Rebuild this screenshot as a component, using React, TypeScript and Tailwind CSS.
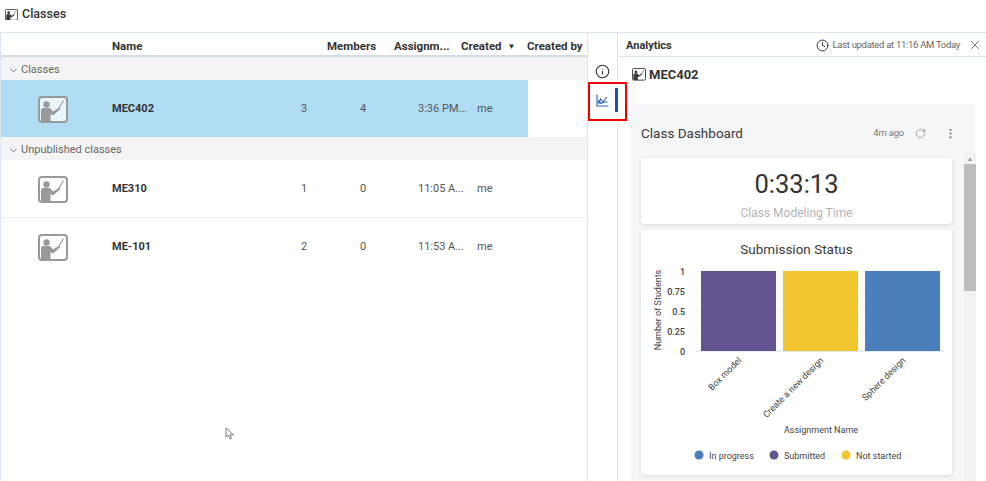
import { ChevronDown, Clock, EllipsisVertical, Info, RotateCw, X } from "lucide-react";

const rows = [
  { name: "ME310", members: 1, assignments: 0, created: "11:05 A..." },
  { name: "ME-101", members: 2, assignments: 0, created: "11:53 A..." },
];

// grey teacher-at-a-board icon, used big in rows and small in titles
function ClassIcon({ size = 30, dark = false }: { size?: number; dark?: boolean }) {
  const color = dark ? "#3a3a3a" : "#999999";
  return (
    <svg width={size} height={size * 0.9} viewBox="0 0 30 27" fill="none">
      <rect x="1" y="1" width="28" height="25" rx="3" fill="#ffffff" fillOpacity={dark ? 1 : 0.7} stroke={color} strokeWidth="2" />
      <circle cx="8.5" cy="8.5" r="3.2" fill={color} />
      <path d="M3 25.5V14.5a2.5 2.5 0 0 1 2.5-2.5h6.5l3 3.5 6.5-4 1 1.5-7.5 6.5-2.5-1.5v7.5z" fill={color} />
      <path d="M21 12l4.5-7.5" stroke={color} strokeWidth="1.1" />
    </svg>
  );
}

function ChartIcon() {
  return (
    <svg width="13" height="13" viewBox="0 0 13 13" fill="none" stroke="#2b5cb8" strokeWidth="1.1">
      <path d="M1 0.5V12H12.5" />
      <path d="M2.5 10l2-5 2.5 3 4-5" />
      <path d="M2 6.5l3 3 3-1.5 3.5 0" />
    </svg>
  );
}

function GroupRow({ label }: { label: string }) {
  return (
    <div className="flex items-center gap-[2px] bg-[#f4f4f4] pl-[7px] pt-[3px] text-[11px] text-[#666]">
      <ChevronDown size={11} strokeWidth={2} />
      <span>{label}</span>
    </div>
  );
}

function ClassRow({ name, members, assignments, created, selected }: { name: string; members: number; assignments: number; created: string; selected?: boolean }) {
  return (
    <div className={`grid h-[57px] w-[527px] grid-cols-[111px_184px_16px_43px_16px_47px_59px_51px] items-center pt-[2px] text-[11px] text-[#555] ${selected ? "bg-[#b0dcf4]" : ""}`}>
      <div className="flex justify-center pr-[8px]">
        <ClassIcon />
      </div>
      <span className="font-bold text-[#333]">{name}</span>
      <span className="text-center">{members}</span>
      <span />
      <span className="text-center">{assignments}</span>
      <span />
      <span className="whitespace-nowrap">{created}</span>
      <span>me</span>
    </div>
  );
}

function SubmissionChart() {
  const ticks = [
    { label: "1", y: 41 },
    { label: "0.75", y: 61 },
    { label: "0.5", y: 81 },
    { label: "0.25", y: 101 },
    { label: "0", y: 121 },
  ];
  const bars = [
    { x: 60, color: "#63548f", name: "Box model" },
    { x: 142, color: "#f0c52e", name: "Create a new design" },
    { x: 224, color: "#4a7fba", name: "Sphere design" },
  ];
  const legend = [
    { cx: 58, color: "#4a7fba", text: "In progress", tx: 68 },
    { cx: 133, color: "#63548f", text: "Submitted", tx: 143 },
    { cx: 205, color: "#f0c52e", text: "Not started", tx: 215 },
  ];
  return (
    <svg width="311" height="245" viewBox="0 0 311 245" className="absolute left-0 top-0" fontFamily="Roboto, sans-serif">
      {ticks.map((t) => (
        <g key={t.label}>
          <line x1="55" x2="303" y1={t.y} y2={t.y} stroke={t.y === 121 ? "#cdd6ea" : "#f0f0f0"} />
          <text x="44" y={t.y + 3.5} textAnchor="end" fontSize="9" fontWeight="500" fill="#444">
            {t.label}
          </text>
        </g>
      ))}
      {bars.map((b) => (
        <g key={b.name}>
          <rect x={b.x} y="41" width="75" height="80" fill={b.color} />
          <text transform={`translate(${b.x + 41} 131) rotate(-45)`} textAnchor="end" fontSize="9" fill="#444">
            {b.name}
          </text>
        </g>
      ))}
      <text transform="translate(20 80) rotate(-90)" textAnchor="middle" fontSize="9" fill="#444">
        Number of Students
      </text>
      <text x="180" y="203" textAnchor="middle" fontSize="9" fill="#444">
        Assignment Name
      </text>
      {legend.map((l) => (
        <g key={l.text}>
          <circle cx={l.cx} cy="225" r="4.5" fill={l.color} />
          <text x={l.tx} y="228.5" fontSize="9" fill="#444">
            {l.text}
          </text>
        </g>
      ))}
    </svg>
  );
}

export default function App() {
  return (
    <div className="relative flex h-[481px] w-[986px] flex-col overflow-hidden bg-white font-['Roboto',sans-serif] text-[#333]">
      <div className="flex h-[33px] shrink-0 items-center gap-[4px] border-b border-[#dde5ee] pb-[3px] pl-[5px] text-[12.5px] font-medium">
        <ClassIcon size={13} dark />
        <span>Classes</span>
      </div>

      <div className="flex min-h-0 flex-1">
        {/* class list */}
        <div className="flex w-[588px] shrink-0 flex-col border-l border-r border-[#dde5ee]">
          <div className="grid h-[24px] shrink-0 grid-cols-[111px_215px_67px_67px_66px_60px] items-center border-b-2 border-[#d5dbe3] pt-[5px] text-[11.5px] font-bold text-[#333]">
            <span />
            <span>Name</span>
            <span>Members</span>
            <span>Assignm...</span>
            <span className="flex items-center gap-[6px]">
              Created <span className="text-[8px]">▼</span>
            </span>
            <span className="whitespace-nowrap">Created by</span>
          </div>
          <div className="grid h-[23px] shrink-0">
            <GroupRow label="Classes" />
          </div>
          <ClassRow name="MEC402" members={3} assignments={4} created="3:36 PM..." selected />
          <div className="grid h-[23px] shrink-0">
            <GroupRow label="Unpublished classes" />
          </div>
          <div className="border-b border-[#eeeeee]">
            <ClassRow {...rows[0]} />
          </div>
          <ClassRow {...rows[1]} />
        </div>

        {/* side rail */}
        <div className="flex w-[30px] shrink-0 flex-col items-center border-r border-[#dde5ee] pt-[31px]">
          <Info size={15} strokeWidth={1.8} className="text-[#333]" />
          <div className="mt-[9px] flex h-[24px] w-full items-center pl-[8px]">
            <ChartIcon />
            <span className="ml-auto mr-[-1px] h-[24px] w-[3px] bg-[#1f4fa8]" />
          </div>
        </div>

        {/* analytics panel */}
        <div className="flex min-w-0 flex-1 flex-col">
          <div className="flex h-[24px] shrink-0 items-center border-b border-[#dde5ee] pl-[8px] pr-[4px] pt-[1px]">
            <span className="pt-[2px] text-[11px] font-bold">Analytics</span>
            <Clock size={13} strokeWidth={1.8} className="ml-auto text-[#333]" />
            <span className="ml-[4px] text-[9.5px] tracking-[-0.3px] text-[#666]">Last updated at 11:16 AM Today</span>
            <X size={14} strokeWidth={1.5} className="ml-[8px] text-[#666]" />
          </div>
          <div className="flex h-[36px] shrink-0 items-center gap-[3px] pb-[1px] pl-[14px]">
            <ClassIcon size={14} dark />
            <span className="text-[13px] font-bold">MEC402</span>
          </div>
          <div className="ml-[13px] mr-[11px] mt-[11px] flex min-h-0 flex-1 flex-col bg-[#f5f6f8] pl-[10px]">
            <div className="flex h-[49px] shrink-0 items-center pt-[9px]">
              <span className="text-[13.5px] text-[#3a3a3a]">Class Dashboard</span>
              <span className="ml-auto text-[9.5px] tracking-[-0.2px] text-[#777]">4m ago</span>
              <RotateCw size={11} strokeWidth={1.6} className="ml-[11px] text-[#888]" />
              <EllipsisVertical size={13} strokeWidth={2} className="ml-[18px] mr-[18px] text-[#777]" />
            </div>
            <div className="flex min-h-0 flex-1">
              <div className="flex w-[311px] shrink-0 flex-col gap-[6px] pt-[5px]">
                <div className="flex h-[66px] flex-col items-center rounded-[4px] bg-white pt-[8px] shadow-[0_1px_4px_rgba(0,0,0,0.12)]">
                  <span className="text-[25.5px] leading-[36px] text-[#333]">0:33:13</span>
                  <span className="mt-[2px] text-[12px] text-[#b4b4b4]">Class Modeling Time</span>
                </div>
                <div className="relative h-[245px] rounded-[4px] bg-white pt-[9px] text-center text-[13.5px] text-[#3a3a3a] shadow-[0_1px_4px_rgba(0,0,0,0.12)]">
                  Submission Status
                  <SubmissionChart />
                </div>
              </div>
              <div className="ml-[12px] flex w-[12px] shrink-0 flex-col bg-[#f2f2f2]">
                <div className="flex h-[11px] items-center justify-center text-[6px] text-[#888]">▲</div>
                <div className="h-[127px] bg-[#bdbdbd]" />
              </div>
            </div>
          </div>
        </div>
      </div>

      {/* annotation box over the chart tab */}
      <div className="absolute left-[588px] top-[82px] h-[39px] w-[39px] border-2 border-[#f00000]" />
      {/* mouse pointer */}
      <svg className="absolute left-[225px] top-[427px]" width="10" height="13" viewBox="0 0 10 13" fill="#fff" stroke="#777" strokeWidth="1">
        <path d="M1 1v9l2.2-1.8L5 12l1.5-.7-1.5-3.5H8.5z" />
      </svg>
    </div>
  );
}
